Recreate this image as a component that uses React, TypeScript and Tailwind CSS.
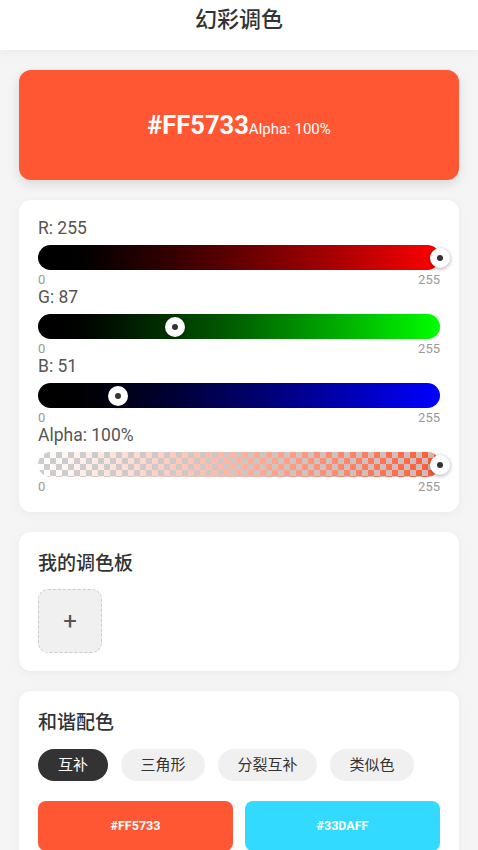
import React from "react";

type Row = { label: string; value: number; max: number; track: string; alpha?: boolean };

const rows: Row[] = [
  { label: "R: 255", value: 255, max: 255, track: "bg-linear-to-r from-black to-[#ff0000]" },
  { label: "G: 87", value: 87, max: 255, track: "bg-linear-to-r from-black to-[#00ff00]" },
  { label: "B: 51", value: 51, max: 255, track: "bg-linear-to-r from-black to-[#0000ff]" },
  { label: "Alpha: 100%", value: 255, max: 255, track: "", alpha: true },
];

function Thumb({ pct }: { pct: number }) {
  return (
    <div
      className="absolute top-1/2 -translate-x-1/2 -translate-y-1/2 w-[20px] h-[20px] rounded-full bg-white shadow-[0_1px_4px_rgba(0,0,0,0.35)] flex items-center justify-center"
      style={{ left: `${pct}%` }}
    >
      <div className="w-[6px] h-[6px] rounded-full bg-[#333]" />
    </div>
  );
}

function SliderRow({ row }: { row: Row }) {
  const pct = (row.value / row.max) * 100;
  return (
    <div className="flex flex-col">
      <div className="text-[17.5px] leading-[20px] text-[#555]">{row.label}</div>
      <div className="relative mt-[7px] h-[25px]">
        {row.alpha ? (
          <div className="absolute inset-0 rounded-full overflow-hidden bg-linear-to-r from-white to-[#FF5733]">
            <div className="absolute inset-0 bg-[conic-gradient(rgba(200,200,200,0.9)_25%,transparent_0_50%,rgba(200,200,200,0.9)_0_75%,transparent_0)] bg-size-[12px_12px]" />
          </div>
        ) : (
          <div className={`absolute inset-0 rounded-full ${row.track}`} />
        )}
        <Thumb pct={pct} />
      </div>
      <div className="mt-[3px] flex justify-between text-[13px] leading-[14px] text-[#999]">
        <span>0</span>
        <span>255</span>
      </div>
    </div>
  );
}

export default function App() {
  const chips = ["互补", "三角形", "分裂互补", "类似色"];
  return (
    <div className="min-h-[850px] bg-[#f5f5f5] font-[Roboto,'Noto_Sans_CJK_SC',sans-serif]">
      <header className="h-[50px] bg-white shadow-[0_2px_8px_rgba(0,0,0,0.05)] flex justify-center pt-[6px]">
        <h1 className="text-[22px] leading-[28px] font-medium text-[#333]">幻彩调色</h1>
      </header>

      <main className="px-[19px] pt-[20px] flex flex-col gap-[20px]">
        <div className="h-[110px] rounded-[12px] bg-[#FF5733] shadow-[0_4px_12px_rgba(0,0,0,0.12)] flex items-center justify-center">
          <div className="flex items-baseline text-white">
            <span className="text-[25.5px] font-bold">#FF5733</span>
            <span className="text-[15px]">Alpha: 100%</span>
          </div>
        </div>

        <div className="rounded-[12px] bg-white shadow-[0_2px_10px_rgba(0,0,0,0.05)] px-[19px] pt-[18px] pb-[18px] flex flex-col">
          {rows.map((r) => (
            <SliderRow key={r.label} row={r} />
          ))}
        </div>

        <div className="rounded-[12px] bg-white shadow-[0_2px_10px_rgba(0,0,0,0.05)] px-[19px] pt-[20px] pb-[18px]">
          <div className="text-[19px] leading-[24px] font-medium text-[#333]">我的调色板</div>
          <div className="mt-[13px] w-[64px] h-[64px] rounded-[10px] border border-dashed border-[#ccc] bg-[#f0f0f0] flex items-center justify-center text-[24px] text-[#555]">
            +
          </div>
        </div>

        <div className="rounded-[12px] bg-white shadow-[0_2px_10px_rgba(0,0,0,0.05)] px-[19px] pt-[20px] pb-[20px]">
          <div className="text-[19px] leading-[24px] font-medium text-[#333]">和谐配色</div>
          <div className="mt-[14px] flex gap-[13px]">
            {chips.map((c, i) => (
              <div
                key={c}
                className={
                  i === 0
                    ? "h-[32px] px-[20px] rounded-full bg-[#333] text-white text-[15px] flex items-center"
                    : "h-[32px] px-[19.5px] rounded-full bg-[#f0f0f0] text-[#333] text-[15px] flex items-center"
                }
              >
                {c}
              </div>
            ))}
          </div>
          <div className="mt-[20px] grid grid-cols-2 gap-[12px]">
            <div className="h-[50px] rounded-[8px] bg-[#FF5733] flex items-center justify-center text-white text-[12.5px] font-bold">
              #FF5733
            </div>
            <div className="h-[50px] rounded-[8px] bg-[#33DAFF] flex items-center justify-center text-white text-[12.5px] font-bold">
              #33DAFF
            </div>
          </div>
        </div>
      </main>
    </div>
  );
}
